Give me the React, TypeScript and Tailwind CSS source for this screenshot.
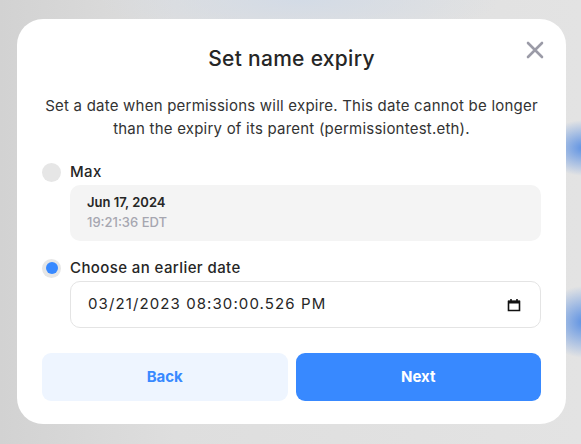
import React from "react";

export default function App() {
  return (
    <div className="w-[581px] h-[444px] overflow-hidden bg-[radial-gradient(ellipse_40px_28px_at_584px_148px,#5c91e3,transparent),radial-gradient(ellipse_40px_36px_at_584px_322px,#5c91e3,transparent),radial-gradient(ellipse_200px_40px_at_300px_0px,#d3dbe6,transparent),linear-gradient(90deg,#d2d2d2,#dedede_30%,#e3e3e3)] pt-[19px] pl-[17px] font-['Inter',sans-serif]">
      <div className="relative w-[549px] h-[405px] bg-white rounded-[26px] px-[25px] pt-[26px] flex flex-col">
        <div className="absolute right-[22px] top-[22px] w-[18px] h-[18px] text-[#9b9ba7]">
          <svg viewBox="0 0 18 18" width="18" height="18" fill="none" stroke="currentColor" strokeWidth="2.6" strokeLinecap="round" className="block">
            <path d="M2 2L16 16M16 2L2 16" />
          </svg>
        </div>
        <h1 className="text-center text-[21px] leading-[28px] font-medium text-[#262626] tracking-[0.3px]">Set name expiry</h1>
        <p className="mt-[21px] text-center text-[15px] leading-[23px] text-[#333] tracking-[0.22px]">
          Set a date when permissions will expire. This date cannot be longer than the expiry of its parent (permissiontest.eth).
        </p>
        <div className="mt-[22px] flex items-center gap-[9px] h-[20px]">
          <span className="w-[19px] h-[19px] rounded-full bg-[#e6e6e6] shrink-0" />
          <span className="text-[15px] font-medium text-[#262626] tracking-[0.4px]">Max</span>
        </div>
        <div className="mt-[3px] ml-[28px] h-[56px] rounded-[10px] bg-[#f4f4f4] px-[17px] pt-[9px]">
          <div className="text-[13px] leading-[16px] font-semibold text-[#262626]">Jun 17, 2024</div>
          <div className="mt-[4px] text-[13px] leading-[16px] font-medium text-[#a6a6b0]">19:21:36 EDT</div>
        </div>
        <div className="mt-[17px] flex items-center gap-[9px] h-[20px]">
          <span className="w-[19px] h-[19px] rounded-full bg-[#e6e6e6] shrink-0 flex items-center justify-center">
            <span className="w-[12px] h-[12px] rounded-full bg-[#3889ff]" />
          </span>
          <span className="text-[15px] font-medium text-[#262626] tracking-[0.4px]">Choose an earlier date</span>
        </div>
        <div className="mt-[3px] ml-[28px] h-[47px] rounded-[10px] border border-[#e4e4e4] flex items-center pl-[17px] pr-[19px]">
          <span className="text-[15px] text-[#262626] tracking-[1.1px]">03/21/2023 08:30:00.526 PM</span>
          <svg className="ml-auto" width="14" height="14" viewBox="0 0 14 14">
            <path d="M1.5 3.5h11v9h-11z" fill="none" stroke="#111" strokeWidth="1.6" />
            <path d="M1 2.5h12v3H1z" fill="#111" />
            <path d="M4 1v2M10 1v2" stroke="#111" strokeWidth="1.6" />
          </svg>
        </div>
        <div className="mt-[25px] flex gap-[8px]">
          <button className="flex-1 h-[48px] rounded-[9px] bg-[#eef5ff] text-[#3889ff] text-[15px] font-bold">Back</button>
          <button className="flex-1 h-[48px] rounded-[9px] bg-[#3889ff] text-white text-[15px] font-bold">Next</button>
        </div>
      </div>
    </div>
  );
}
